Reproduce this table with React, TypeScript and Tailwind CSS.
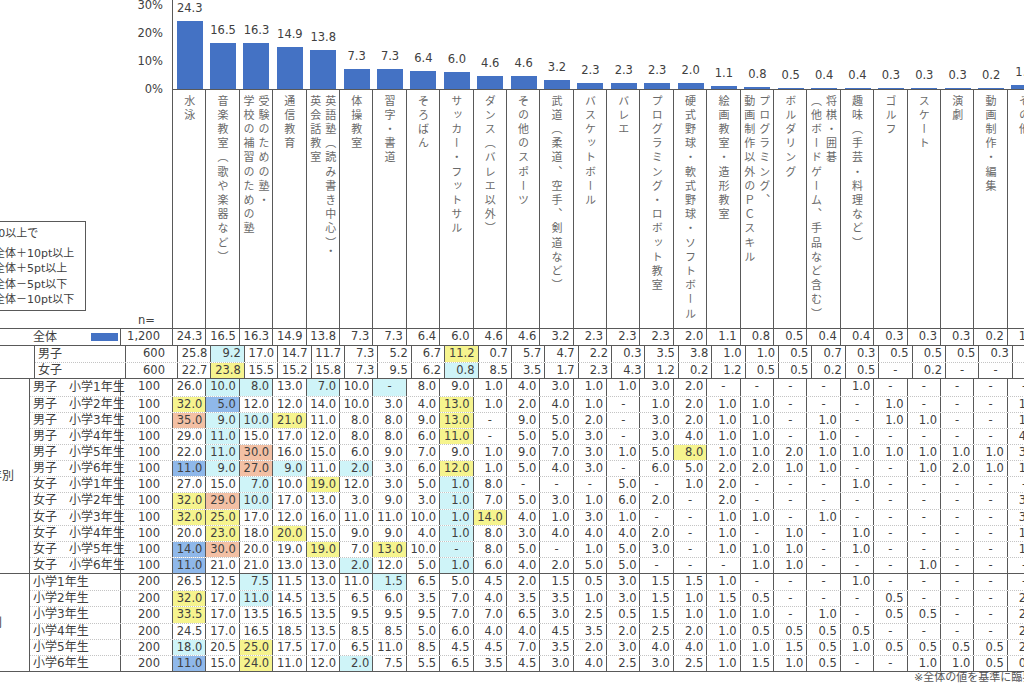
import clsx from "clsx";

interface Column {
  lines: string[];
  total: number;
}

const COLUMNS: Column[] = [
  { lines: ["水泳"], total: 24.3 },
  { lines: ["音楽教室（歌や楽器など）"], total: 16.5 },
  { lines: ["受験のための塾・", "学校の補習のための塾"], total: 16.3 },
  { lines: ["通信教育"], total: 14.9 },
  { lines: ["英語塾（読み書き中心）・", "英会話教室"], total: 13.8 },
  { lines: ["体操教室"], total: 7.3 },
  { lines: ["習字・書道"], total: 7.3 },
  { lines: ["そろばん"], total: 6.4 },
  { lines: ["サッカー・フットサル"], total: 6.0 },
  { lines: ["ダンス（バレエ以外）"], total: 4.6 },
  { lines: ["その他のスポーツ"], total: 4.6 },
  { lines: ["武道（柔道、空手、剣道など）"], total: 3.2 },
  { lines: ["バスケットボール"], total: 2.3 },
  { lines: ["バレエ"], total: 2.3 },
  { lines: ["プログラミング・ロボット教室"], total: 2.3 },
  { lines: ["硬式野球・軟式野球・ソフトボール"], total: 2.0 },
  { lines: ["絵画教室・造形教室"], total: 1.1 },
  { lines: ["プログラミング、", "動画制作以外のＰＣスキル"], total: 0.8 },
  { lines: ["ボルダリング"], total: 0.5 },
  { lines: ["将棋・囲碁", "（他ボードゲーム、手品など含む）"], total: 0.4 },
  { lines: ["趣味（手芸・料理など）"], total: 0.4 },
  { lines: ["ゴルフ"], total: 0.3 },
  { lines: ["スケート"], total: 0.3 },
  { lines: ["演劇"], total: 0.3 },
  { lines: ["動画制作・編集"], total: 0.2 },
  { lines: ["その他"], total: 1.4 },
];

// value suffix picks the cell colour: o/y above the total, c/b below it
const TOTAL_ROW =
  "24.3 16.5 16.3 14.9 13.8 7.3 7.3 6.4 6.0 4.6 4.6 3.2 2.3 2.3 2.3 2.0 1.1 0.8 0.5 0.4 0.4 0.3 0.3 0.3 0.2 1.4";

const SEX_ROWS = [
  { label: "男子", n: "600", vals: "25.8 9.2c 17.0 14.7 11.7 7.3 5.2 6.7 11.2y 0.7 5.7 4.7 2.2 0.3 3.5 3.8 1.0 1.0 0.5 0.7 0.3 0.5 0.5 0.5 0.3 1.5" },
  { label: "女子", n: "600", vals: "22.7 23.8y 15.5 15.2 15.8 7.3 9.5 6.2 0.8c 8.5 3.5 1.7 2.3 4.3 1.2 0.2 1.2 0.5 0.5 0.2 0.5 - 0.2 - - 1.3" },
];

const SEX_GRADE_ROWS = [
  { label: "男子　小学1年生", n: "100", vals: "26.0 10.0c 8.0c 13.0 7.0c 10.0 -c 8.0 9.0 1.0 4.0 3.0 1.0 1.0 3.0 2.0 - - - - 1.0 - - - - -" },
  { label: "男子　小学2年生", n: "100", vals: "32.0y 5.0b 12.0 12.0 14.0 10.0 3.0 4.0 13.0y 1.0 2.0 4.0 1.0 - 1.0 2.0 1.0 1.0 - - - 1.0 - - - 1.0" },
  { label: "男子　小学3年生", n: "100", vals: "35.0o 9.0c 10.0c 21.0y 11.0 8.0 8.0 9.0 13.0y - 9.0 5.0 2.0 - 3.0 2.0 1.0 1.0 - 1.0 - 1.0 1.0 - - 1.0" },
  { label: "男子　小学4年生", n: "100", vals: "29.0 11.0c 15.0 17.0 12.0 8.0 8.0 6.0 11.0y - 5.0 5.0 3.0 - 3.0 4.0 1.0 1.0 - 1.0 - - - - - 4.0" },
  { label: "男子　小学5年生", n: "100", vals: "22.0 11.0c 30.0o 16.0 15.0 6.0 9.0 7.0 9.0 1.0 9.0 7.0 3.0 1.0 5.0 8.0y 1.0 1.0 2.0 1.0 1.0 1.0 1.0 1.0 1.0 3.0" },
  { label: "男子　小学6年生", n: "100", vals: "11.0b 9.0c 27.0o 9.0c 11.0 2.0c 3.0 6.0 12.0y 1.0 5.0 4.0 3.0 - 6.0 5.0 2.0 2.0 1.0 1.0 - - 1.0 2.0 1.0 1.0" },
  { label: "女子　小学1年生", n: "100", vals: "27.0 15.0 7.0c 10.0 19.0y 12.0 3.0 5.0 1.0c 8.0 - - - 5.0 - 1.0 2.0 - - - 1.0 - - - - -" },
  { label: "女子　小学2年生", n: "100", vals: "32.0y 29.0o 10.0c 17.0 13.0 3.0 9.0 3.0 1.0c 7.0 5.0 3.0 1.0 6.0 2.0 - 2.0 - - - - - - - - 3.0" },
  { label: "女子　小学3年生", n: "100", vals: "32.0y 25.0y 17.0 12.0 16.0 11.0 11.0 10.0 1.0c 14.0y 4.0 1.0 3.0 1.0 - - 1.0 1.0 - 1.0 - - - - - 3.0" },
  { label: "女子　小学4年生", n: "100", vals: "20.0 23.0y 18.0 20.0y 15.0 9.0 9.0 4.0 1.0c 8.0 3.0 4.0 4.0 4.0 2.0 - 1.0 - 1.0 - 1.0 - - - - 1.0" },
  { label: "女子　小学5年生", n: "100", vals: "14.0b 30.0o 20.0 19.0 19.0y 7.0 13.0y 10.0 -c 8.0 5.0 - 1.0 5.0 3.0 - 1.0 1.0 1.0 - 1.0 - - - - 1.0" },
  { label: "女子　小学6年生", n: "100", vals: "11.0b 21.0 21.0 13.0 13.0 2.0c 12.0 5.0 1.0c 6.0 4.0 2.0 5.0 5.0 - - - 1.0 1.0 - - - 1.0 - - -" },
];

const GRADE_ROWS = [
  { label: "小学1年生", n: "200", vals: "26.5 12.5 7.5c 11.5 13.0 11.0 1.5c 6.5 5.0 4.5 2.0 1.5 0.5 3.0 1.5 1.5 1.0 - - - 1.0 - - - - -" },
  { label: "小学2年生", n: "200", vals: "32.0y 17.0 11.0c 14.5 13.5 6.5 6.0 3.5 7.0 4.0 3.5 3.5 1.0 3.0 1.5 1.0 1.5 0.5 - - - 0.5 - - - 2.0" },
  { label: "小学3年生", n: "200", vals: "33.5y 17.0 13.5 16.5 13.5 9.5 9.5 9.5 7.0 7.0 6.5 3.0 2.5 0.5 1.5 1.0 1.0 1.0 - 1.0 - 0.5 0.5 - - 2.0" },
  { label: "小学4年生", n: "200", vals: "24.5 17.0 16.5 18.5 13.5 8.5 8.5 5.0 6.0 4.0 4.0 4.5 3.5 2.0 2.5 2.0 1.0 0.5 0.5 0.5 0.5 - - - - 2.5" },
  { label: "小学5年生", n: "200", vals: "18.0c 20.5 25.0y 17.5 17.0 6.5 11.0 8.5 4.5 4.5 7.0 3.5 2.0 3.0 4.0 4.0 1.0 1.0 1.5 0.5 1.0 0.5 0.5 0.5 0.5 2.0" },
  { label: "小学6年生", n: "200", vals: "11.0b 15.0 24.0y 11.0 12.0 2.0c 7.5 5.5 6.5 3.5 4.5 3.0 4.0 2.5 3.0 2.5 1.0 1.5 1.0 0.5 - - 1.0 1.0 0.5 0.5" },
];

const HIGHLIGHT: Record<string, string> = {
  y: "bg-[#f6f48e]",
  o: "bg-[#f3c0a4]",
  c: "bg-[#cff4f8]",
  b: "bg-[#8fb8ea]",
};

const LEGEND = [
  { text: "全体＋10pt以上", swatch: "bg-[#f3c0a4]" },
  { text: "全体＋5pt以上", swatch: "bg-[#f6f48e]" },
  { text: "全体－5pt以下", swatch: "bg-[#cff4f8]" },
  { text: "全体－10pt以下", swatch: "bg-[#8fb8ea]" },
];

function ValueCell({ raw }: { raw: string }) {
  const hl = HIGHLIGHT[raw.slice(-1)];
  const value = hl ? raw.slice(0, -1) : raw;
  return (
    <div
      className={clsx(
        "w-[33.4px] shrink-0 border-r border-[#595959]",
        hl,
        value === "-" ? "text-center" : "pr-[3px] text-right",
      )}
    >
      {value}
    </div>
  );
}

function DataRow({
  label,
  n,
  vals,
  first,
}: {
  label: React.ReactNode;
  n: string;
  vals: string;
  first?: boolean;
}) {
  return (
    <div
      className={clsx(
        "flex h-[16.15px] leading-[15px]",
        !first && "border-t border-dotted border-[#c4c4c4]",
      )}
    >
      <div className="flex w-[91px] shrink-0 items-center border-r border-[#595959] pl-[3px] whitespace-nowrap text-[12px]">
        {label}
      </div>
      <div className="w-[52px] shrink-0 border-r border-[#595959] pr-[12px] text-right">
        {n}
      </div>
      {vals.split(" ").map((v, i) => (
        <ValueCell key={i} raw={v} />
      ))}
    </div>
  );
}

function Group({
  title,
  titlePad,
  rows,
}: {
  title: string;
  titlePad: string;
  rows: { label: string; n: string; vals: string }[];
}) {
  return (
    <div className="flex border-t border-[#595959]">
      <div
        className={clsx(
          "flex w-[30px] shrink-0 items-center justify-end overflow-hidden border-r border-[#595959] whitespace-nowrap text-[12px]",
          titlePad,
        )}
      >
        {title}
      </div>
      <div className="flex flex-col">
        {rows.map((r, i) => (
          <DataRow key={r.label} label={r.label} n={r.n} vals={r.vals} first={i === 0} />
        ))}
      </div>
    </div>
  );
}

export default function App() {
  return (
    <div className="h-[684px] w-[1024px] overflow-hidden bg-white text-[11.5px] text-[#404040] [font-family:'DejaVu_Sans','Noto_Sans_CJK_JP',sans-serif]">
      {/* chart + column headings */}
      <div className="flex h-[328px]">
        <div className="flex w-[173px] shrink-0 flex-col border-r border-[#595959]">
          <div className="h-[89px]">
            <div className="-mt-[9px] flex flex-col items-end pr-[9px]">
              {["30%", "20%", "10%", "0%"].map((t) => (
                <div key={t} className="h-[28px] leading-[28px]">
                  {t}
                </div>
              ))}
            </div>
          </div>
          <div className="flex flex-1 flex-col pt-[132px]">
            <div className="-ml-[23px] h-[90px] w-[109px] border border-[#595959] px-[4px] pt-[4px] text-[11px] leading-[15.5px] whitespace-nowrap">
              <div className="mb-[4px] -ml-[7px]">n=30以上で</div>
              {LEGEND.map((l) => (
                <div key={l.text} className="flex items-center gap-[4px]">
                  <span className={clsx("h-[9px] w-[12px] shrink-0", l.swatch)} />
                  <span className="-ml-[4px]">{l.text}</span>
                </div>
              ))}
            </div>
            <div className="mt-auto h-[16px] pr-[17px] text-right leading-[16px]">n=</div>
          </div>
        </div>

        {COLUMNS.map((c) => (
          <div key={c.lines.join("")} className="flex w-[33.4px] shrink-0 flex-col">
            <div className="flex h-[89px] flex-col items-center justify-end">
              <div className="mb-[6px] leading-[13px] whitespace-nowrap">{c.total.toFixed(1)}</div>
              <div
                className="w-[26px] bg-[#4472c4]"
                style={{ height: Math.max(c.total * 2.8, 1) }}
              />
            </div>
            <div className="flex flex-1 justify-center border-t border-r border-[#595959] pt-[5px]">
              <div className="text-[11px] leading-[15px] tracking-[3.2px] text-[#6a6a6a] [writing-mode:vertical-rl] [font-family:'Noto_Sans_CJK_JP',sans-serif]">
                {c.lines.map((line, i) => (
                  <span key={i}>
                    {i > 0 && <br />}
                    {line}
                  </span>
                ))}
              </div>
            </div>
          </div>
        ))}
      </div>

      {/* table */}
      <div className="flex border-t border-[#595959]">
        <div className="w-[30px] shrink-0" />
        <DataRow
          first
          label={
            <div className="flex w-full items-center justify-between pr-[2px]">
              <span>全体</span>
              <span className="h-[8px] w-[27px] bg-[#4472c4]" />
            </div>
          }
          n="1,200"
          vals={TOTAL_ROW}
        />
      </div>
      <Group title="性別" titlePad="pr-[34px]" rows={SEX_ROWS} />
      <Group title="性・学年別" titlePad="pr-[15px]" rows={SEX_GRADE_ROWS} />
      <Group title="学年別" titlePad="pr-[27px]" rows={GRADE_ROWS} />
      <div className="border-t border-[#595959] pl-[914px] text-[11px] leading-[12px] whitespace-nowrap text-[#555]">
        ※全体の値を基準に臨界値を設定
      </div>
    </div>
  );
}
